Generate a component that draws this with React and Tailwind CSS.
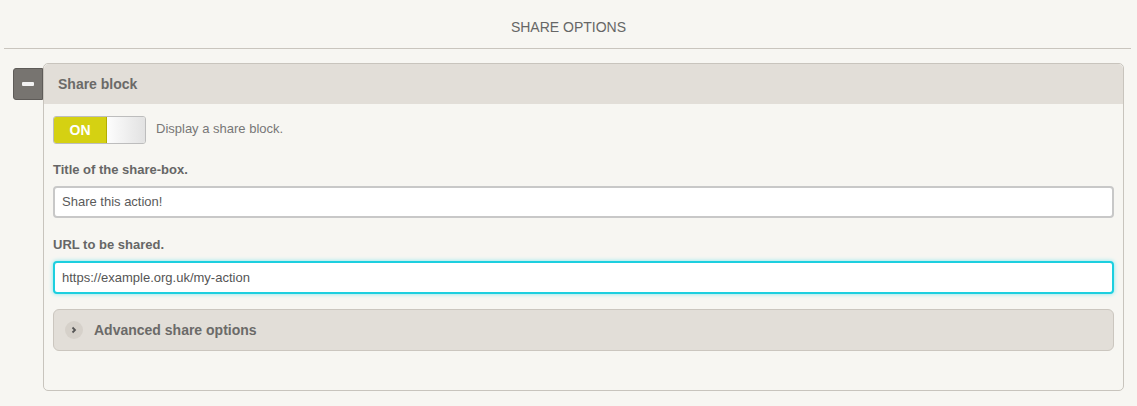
import React from "react";

export default function App() {
  return (
    <div className="min-h-[406px] w-[1137px] bg-[#f7f6f2] font-['Liberation_Sans',Arial,sans-serif] pt-[18px]">
      <div className="text-center text-[14px] leading-[18px] text-[#666]">SHARE OPTIONS</div>
      <div className="mx-[4px] mr-[6px] mt-[12px] h-px bg-[#c9c5be]"></div>
      <div className="mt-[14px] flex">
        <div className="ml-[13px] mt-[5px] flex h-[32px] w-[30px] items-center justify-center rounded-l-[3px] border border-[#5e5b58] bg-[#777470]">
          <div className="h-[4px] w-[12px] rounded-[1px] bg-[#f2f2f2]"></div>
        </div>
        <div className="w-[1081px] rounded-[5px] border border-[#c8c4bd] bg-[#f7f6f2] pb-[39px]">
          <div className="flex h-[40px] items-center rounded-t-[5px] bg-[#e2ded8] pl-[14px] text-[14px] font-bold text-[#6b6a68]">
            Share block
          </div>
          <div className="px-[9px]">
            <div className="mt-[12px] flex items-center">
              <div className="flex h-[28px] w-[93px] overflow-hidden rounded-[3px] border border-[#bdbdbd]">
                <div className="flex w-[53px] items-center justify-center border-r border-[#b3ae00] bg-[#d5d112] text-[14px] font-bold text-white">
                  ON
                </div>
                <div className="flex-1 bg-gradient-to-r from-[#fdfdfd] to-[#e2e2e2]"></div>
              </div>
              <div className="ml-[10px] text-[13px] text-[#777] -mt-[2px]">Display a share block.</div>
            </div>
            <div className="mt-[16px] text-[13px] font-bold text-[#666]">Title of the share-box.</div>
            <div className="mt-[6px] flex h-[32px] items-center rounded-[4px] border-2 border-[#c8c8c8] bg-white pl-[7px] text-[13px] text-[#5a5a5a]">
              Share this action!
            </div>
            <div className="mt-[17px] text-[13px] font-bold text-[#666]">URL to be shared.</div>
            <div className="mt-[7px] flex h-[33px] items-center rounded-[4px] border-2 border-[#1ccfdf] bg-white pl-[7px] text-[13px] text-[#555] shadow-[0_0_4px_#7fe6ef]">
              https://example.org.uk/my-action
            </div>
            <div className="mt-[15px] flex h-[42px] items-center rounded-[6px] border border-[#cbc6bf] bg-[#e2ded8] pl-[11px]">
              <div className="flex h-[18px] w-[18px] items-center justify-center rounded-full bg-[#d6d1ca]">
                <svg width="8" height="8" viewBox="0 0 8 8">
                  <path d="M2.5 1.5 L5 4 L2.5 6.5" fill="none" stroke="#555" strokeWidth="1.8" />
                </svg>
              </div>
              <div className="ml-[11px] text-[14px] font-bold text-[#6b6a68]">Advanced share options</div>
            </div>
          </div>
        </div>
      </div>
    </div>
  );
}
